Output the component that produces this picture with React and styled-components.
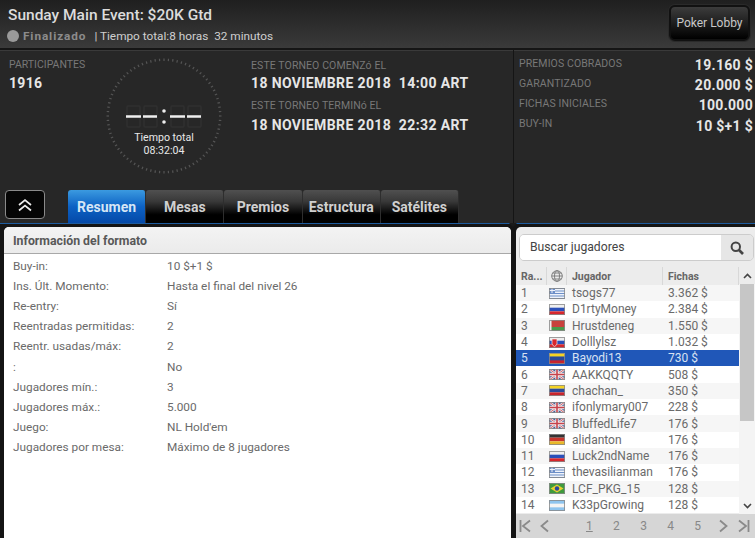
import styled, { createGlobalStyle } from "styled-components";

const Global = createGlobalStyle`
  html, body { margin: 0; padding: 0; background: #272727; overflow: hidden; }
  * { box-sizing: border-box; }
`;

const info = [
  ["Buy-in:", "10 $+1 $"],
  ["Ins. Últ. Momento:", "Hasta el final del nivel 26"],
  ["Re-entry:", "Sí"],
  ["Reentradas permitidas:", "2"],
  ["Reentr. usadas/máx:", "2"],
  [":", "No"],
  ["Jugadores mín.:", "3"],
  ["Jugadores máx.:", "5.000"],
  ["Juego:", "NL Hold'em"],
  ["Jugadores por mesa:", "Máximo de 8 jugadores"],
];

const players = [
  ["tsogs77", "3.362 $", "gr"],
  ["D1rtyMoney", "2.384 $", "ru"],
  ["Hrustdeneg", "1.550 $", "by"],
  ["Dolllylsz", "1.032 $", "sk"],
  ["Bayodi13", "730 $", "co"],
  ["AAKKQQTY", "508 $", "uk"],
  ["chachan_", "350 $", "co"],
  ["ifonlymary007", "228 $", "uk"],
  ["BluffedLife7", "176 $", "uk"],
  ["alidanton", "176 $", "de"],
  ["Luck2ndName", "176 $", "ru"],
  ["thevasilianman", "176 $", "gr"],
  ["LCF_PKG_15", "128 $", "br"],
  ["K33pGrowing", "128 $", "ar"],
];

const prizes = [
  ["PREMIOS COBRADOS", "19.160 $"],
  ["GARANTIZADO", "20.000 $"],
  ["FICHAS INICIALES", "100.000"],
  ["BUY-IN", "10 $+1 $"],
];

const tabs = ["Resumen", "Mesas", "Premios", "Estructura", "Satélites"];

const Page = styled.div`
  width: 755px;
  height: 538px;
  overflow: hidden;
  font-family: Roboto, "Liberation Sans", sans-serif;
  background: #272727;
  display: flex;
  flex-direction: column;
`;

const Header = styled.header`
  height: 50px;
  flex: none;
  padding: 5px 5px 0 8px;
  display: flex;
  justify-content: space-between;
  background: linear-gradient(#1f1f1f, #3a3a3a);
  border-bottom: 2px solid #151515;
  box-shadow: 0 1px 0 #3a3a3a;
`;

const Title = styled.h1`
  margin: 0;
  font-size: 15.5px;
  line-height: 20px;
  font-weight: 500;
  color: #dcdcdc;
`;

const Status = styled.div`
  display: flex;
  align-items: center;
  margin: 3px 0 0 -1px;
  font-size: 11.8px;
  line-height: 16px;
  color: #cfcfcf;
`;

const Dot = styled.span`
  width: 12px;
  height: 12px;
  border-radius: 50%;
  background: #9a9a9a;
  margin-right: 4px;
`;

const Finished = styled.span`
  font-weight: 700;
  letter-spacing: 0.9px;
  color: #8c8c8c;
  margin-right: 8px;
`;

const LobbyButton = styled.button`
  width: 81px;
  height: 36px;
  padding: 0;
  border: 2px solid #111;
  border-radius: 6px;
  background: linear-gradient(#3c3c3c, #000);
  color: #c8c8c8;
  font: 400 12px Roboto, sans-serif;
  box-shadow: 0 0 0 1px #2a2a2a;
`;

const Stats = styled.section`
  height: 174px;
  flex: none;
  display: flex;
  position: relative;
  border-bottom: 1px solid #1d5b9e;
`;

const StatsLeft = styled.div`
  width: 514px;
  flex: none;
  position: relative;
  border-right: 1px solid #151515;
  display: flex;
  flex-wrap: wrap;
  align-content: flex-start;
`;

const Participants = styled.div`
  width: 103px;
  padding: 8px 0 0 9px;
`;

const SmallLabel = styled.div`
  font-size: 10.5px;
  line-height: 13px;
  color: #787878;
  letter-spacing: ${(p) => p.$spacing || 0};
`;

const BigValue = styled.div`
  font-size: 14px;
  line-height: 18px;
  margin-top: 3px;
  font-weight: 700;
  color: #e6e6e6;
  letter-spacing: 0.3px;
`;

const Clock = styled.div`
  width: 118px;
  height: 118px;
  margin: 7px 0 0 2px;
  position: relative;
  display: flex;
  flex-direction: column;
  align-items: center;
  color: #e8e8e8;
  font-size: 10.6px;
  line-height: 12.5px;
  text-align: center;
`;

const ClockFace = styled.svg`
  position: absolute;
  left: 0;
  top: 0;
`;

const ClockText = styled.div`
  position: relative;
  margin-top: 75px;
`;

const Dates = styled.div`
  margin-left: 28px;
  padding-top: 9px;
`;

const DateValue = styled(BigValue)`
  margin: ${(p) => p.$top}px 0 7px;
  white-space: pre;
  letter-spacing: 0.38px;
`;

const TabsRow = styled.nav`
  position: absolute;
  left: 5px;
  bottom: 0;
  display: flex;
  align-items: flex-end;
`;

const CollapseButton = styled.button`
  width: 40px;
  height: 29px;
  margin: 0 23px 4px 0;
  padding: 0;
  background: #050505;
  border: 1px solid #8a8a8a;
  border-radius: 4px;
  display: flex;
  align-items: center;
  justify-content: center;
`;

const Tab = styled.div`
  width: 78.2px;
  height: 33px;
  border-right: 1px solid #2e2e2e;
  border-radius: 3px 3px 0 0;
  font-size: 14px;
  font-weight: 700;
  line-height: 34px;
  text-align: center;
  background: ${(p) =>
    p.$active
      ? "linear-gradient(#3b9ae0, #0d62c4 50%, #0449a8)"
      : "linear-gradient(#505050, #383838 35%, #000 75%)"};
  color: ${(p) => (p.$active ? "#d6e6f5" : "#d0d0d0")};
`;

const StatsRight = styled.div`
  flex: 1;
  padding: 3px 2px 0 5px;
`;

const PrizeRow = styled.div`
  height: 20.2px;
  display: flex;
  justify-content: space-between;
  align-items: center;
`;

const PrizeLabel = styled(SmallLabel)`
  letter-spacing: 0.1px;
`;

const PrizeValue = styled.span`
  font-size: 14px;
  font-weight: 700;
  color: #e6e6e6;
  letter-spacing: 0.3px;
  padding-top: 4px;
`;

const Notch = styled.span`
  position: absolute;
  left: 509px;
  top: 100%;
  border-left: 4px solid transparent;
  border-right: 4px solid transparent;
  border-top: 4px solid #1a1a1a;
  z-index: 2;
`;

const Body = styled.main`
  flex: 1;
  display: flex;
  padding: 3px 0 0 4px;
  background: #141414;
  min-height: 0;
`;

const InfoPanel = styled.section`
  width: 507px;
  background: #fff;
  border-radius: 5px 5px 0 0;
`;

const InfoTitle = styled.h2`
  margin: 0;
  height: 27px;
  padding: 1px 0 0 9px;
  font-size: 12.3px;
  line-height: 27px;
  font-weight: 700;
  color: #585858;
  background: linear-gradient(#f3f3f3, #ebebeb);
  border-bottom: 1px solid #a8a8a8;
  border-radius: 5px 5px 0 0;
`;

const InfoRows = styled.div`
  padding-top: 2px;
`;

const InfoRow = styled.div`
  height: 20.1px;
  padding-left: 9px;
  display: grid;
  grid-template-columns: 154px 1fr;
  align-items: center;
  font-size: 11.8px;
  color: #6a6a6a;
`;

const Side = styled.aside`
  width: 239px;
  margin-left: 5px;
  border-radius: 5px 0 0 0;
  padding-top: 7px;
  display: flex;
  flex-direction: column;
  background: #ececec;
`;

const Search = styled.div`
  height: 27px;
  margin: 0 1px 0 3px;
  display: flex;
  border: 1px solid #ccc;
  border-radius: 5px;
  overflow: hidden;
  flex: none;
`;

const SearchText = styled.div`
  flex: 1;
  background: #fff;
  padding-left: 10px;
  font-size: 12.2px;
  line-height: 25px;
  color: #444;
`;

const SearchIcon = styled.div`
  width: 32px;
  background: #e6e6e6;
  display: flex;
  align-items: center;
  justify-content: center;
`;

const TableWrap = styled.div`
  flex: 1;
  display: flex;
  min-height: 0;
  margin-top: 6px;
`;

const Table = styled.div`
  width: 223px;
  flex: none;
`;

const HeadRow = styled.div`
  height: 18px;
  display: flex;
  align-items: center;
  font-size: 10.5px;
  font-weight: 700;
  color: #666;
  background: #ececec;
`;

const HeadCell = styled.div`
  width: ${(p) => p.$w}px;
  height: 100%;
  padding-left: ${(p) => p.$pad}px;
  line-height: 17px;
  border-right: 1px solid #d8d8d8;
  display: flex;
  align-items: center;
`;

const Row = styled.div`
  height: 16.31px;
  display: flex;
  align-items: center;
  font-size: 12px;
  background: ${(p) => (p.$selected ? "#2057b8" : p.$odd ? "#f6f6f6" : "#fff")};
  color: ${(p) => (p.$selected ? "#d8e2f2" : "#6a6a6a")};
`;

const Rank = styled.div`
  width: 33px;
  padding-left: 5px;
`;

const FlagCell = styled.div`
  width: 23px;
  display: flex;
`;

const Name = styled.div`
  width: 96px;
`;

const Scrollbar = styled.div`
  flex: 1;
  display: flex;
  flex-direction: column;
  background: #f4f4f4;
`;

const ScrollButton = styled.div`
  height: 17px;
  flex: none;
  display: flex;
  align-items: center;
  justify-content: center;
  background: ${(p) => (p.$top ? "#ececec" : "transparent")};
`;

const ScrollTrack = styled.div`
  flex: 1;
`;

const ScrollThumb = styled.div`
  height: 137px;
  background: #c6c6c6;
  margin: 0 1px;
`;

const Pager = styled.div`
  height: 24px;
  flex: none;
  background: #d6d6d6;
  display: flex;
  align-items: center;
  padding-left: 3px;
  font-size: 12px;
  color: #888;
`;

const PagerNums = styled.div`
  display: flex;
  margin-left: 37px;
  width: 115px;
  justify-content: space-between;
`;

const PagerNum = styled.span`
  text-decoration: ${(p) => (p.$current ? "underline" : "none")};
`;

const PagerGroup = styled.div`
  display: flex;
  align-items: center;
  gap: ${(p) => p.$gap}px;
  margin-left: ${(p) => p.$left || 0}px;
`;

const Flag = ({ code }) => {
  const bands = {
    ru: ["#eee", "#2a4fb8", "#d8262c"],
    co: ["#f4d324", "#2a4a9a", "#c8242c"],
    de: ["#333", "#c8342c", "#e8b828"],
  };
  let inner;
  if (bands[code]) {
    inner = bands[code].map((c, i) => <rect key={i} x="0" y={i * 3.67} width="16" height="3.67" fill={c} />);
  } else if (code === "gr") {
    inner = (
      <>
        <rect width="16" height="11" fill="#eef2fa" />
        {[0, 2.5, 5, 7.5, 10].map((y) => <rect key={y} y={y} width="16" height="1" fill="#6d8fc8" />)}
        <rect width="6" height="5" fill="#6d8fc8" />
        <rect x="2.5" width="1" height="5" fill="#eef2fa" />
        <rect y="2" width="6" height="1" fill="#eef2fa" />
      </>
    );
  } else if (code === "by") {
    inner = (
      <>
        <rect width="16" height="7" fill="#c8423c" />
        <rect y="7" width="16" height="4" fill="#4a9a4a" />
        <rect width="2.5" height="11" fill="#eee" />
      </>
    );
  } else if (code === "sk") {
    inner = (
      <>
        <rect width="16" height="3.67" fill="#eee" />
        <rect y="3.67" width="16" height="3.67" fill="#2a4fb8" />
        <rect y="7.33" width="16" height="3.67" fill="#d8262c" />
        <path d="M3 2h5v5q-1 2-2.5 2.5Q4 9 3 7z" fill="#d8262c" stroke="#eee" strokeWidth=".7" />
      </>
    );
  } else if (code === "uk") {
    inner = (
      <>
        <rect width="16" height="11" fill="#4a5f9c" />
        <path d="M0 0l16 11M16 0L0 11" stroke="#eee" strokeWidth="2.4" />
        <path d="M0 0l16 11M16 0L0 11" stroke="#c8424c" strokeWidth=".8" />
        <path d="M8 0v11M0 5.5h16" stroke="#eee" strokeWidth="3.4" />
        <path d="M8 0v11M0 5.5h16" stroke="#c8424c" strokeWidth="1.6" />
      </>
    );
  } else if (code === "br") {
    inner = (
      <>
        <rect width="16" height="11" fill="#3e9a3e" />
        <path d="M8 1.5L14.5 5.5L8 9.5L1.5 5.5z" fill="#e8d030" />
        <circle cx="8" cy="5.5" r="2.2" fill="#2a4a9a" />
      </>
    );
  } else {
    inner = (
      <>
        <rect width="16" height="11" fill="#8ec4ee" />
        <rect y="3.67" width="16" height="3.67" fill="#f4f4f4" />
      </>
    );
  }
  return (
    <svg width="16" height="11" viewBox="0 0 16 11">
      {inner}
      <rect x=".5" y=".5" width="15" height="10" fill="none" stroke="#888" strokeOpacity=".8" />
    </svg>
  );
};

// ghost of a seven segment digit behind the dashes
const Digit = ({ x }) => (
  <g fill="none" stroke="#303030" strokeWidth="1.5">
    <rect x={x} y="49" width="13" height="21" rx="1" />
    <path d={`M${x} 59.5h13`} />
  </g>
);

const Ticks = () => {
  const ticks = [];
  for (let i = 0; i < 80; i++) {
    const a = (i * 4.5 * Math.PI) / 180;
    const c = Math.cos(a);
    const s = Math.sin(a);
    ticks.push(
      <line key={i} x1={59 + 55 * c} y1={59 + 55 * s} x2={59 + 57.5 * c} y2={59 + 57.5 * s} stroke="#565656" strokeWidth="1.2" />
    );
  }
  return ticks;
};

const GoFirst = ({ flip }) => (
  <svg width="13" height="14" viewBox="0 0 13 14" style={flip ? { transform: "scaleX(-1)" } : undefined}>
    <path d="M1.5 1v12M11 1.5L4 7l7 5.5" fill="none" stroke="#8a8a8a" strokeWidth="1.8" />
  </svg>
);

const GoPrev = ({ flip }) => (
  <svg width="9" height="14" viewBox="0 0 9 14" style={flip ? { transform: "scaleX(-1)" } : undefined}>
    <path d="M8 1.5L1.5 7L8 12.5" fill="none" stroke="#8a8a8a" strokeWidth="1.8" />
  </svg>
);

export default function App() {
  return (
    <Page>
      <Global />
      <Header>
        <div>
          <Title>Sunday Main Event: $20K Gtd</Title>
          <Status>
            <Dot />
            <Finished>Finalizado</Finished>
            | Tiempo total:8 horas&nbsp; 32 minutos
          </Status>
        </div>
        <LobbyButton>Poker Lobby</LobbyButton>
      </Header>
      <Stats>
        <StatsLeft>
          <Participants>
            <SmallLabel>PARTICIPANTES</SmallLabel>
            <BigValue>1916</BigValue>
          </Participants>
          <Clock>
            <ClockFace width="118" height="118" viewBox="0 0 118 118">
              <Ticks />
              <Digit x={22} />
              <Digit x={39} />
              <Digit x={66} />
              <Digit x={83} />
              <path d="M21 59.5h15M38 59.5h14M65 59.5h15M82 59.5h14" stroke="#eee" strokeWidth="2.5" />
              <circle cx="59" cy="54" r="1.8" fill="#eee" />
              <circle cx="59" cy="65" r="1.8" fill="#eee" />
            </ClockFace>
            <ClockText>
              Tiempo total
              <br />
              08:32:04
            </ClockText>
          </Clock>
          <Dates>
            <SmallLabel $spacing="0.1px">ESTE TORNEO COMENZó EL</SmallLabel>
            <DateValue $top={2}>18 NOVIEMBRE 2018  14:00 ART</DateValue>
            <SmallLabel $spacing="0.1px">ESTE TORNEO TERMINó EL</SmallLabel>
            <DateValue $top={4}>18 NOVIEMBRE 2018  22:32 ART</DateValue>
          </Dates>
          <TabsRow>
            <CollapseButton>
              <svg width="16" height="14" viewBox="0 0 16 14">
                <path d="M2 7l6-5 6 5M2 12.5l6-5 6 5" fill="none" stroke="#eee" strokeWidth="1.7" />
              </svg>
            </CollapseButton>
            {tabs.map((t, i) => (
              <Tab key={t} $active={i === 0}>{t}</Tab>
            ))}
          </TabsRow>
        </StatsLeft>
        <StatsRight>
          {prizes.map(([label, value]) => (
            <PrizeRow key={label}>
              <PrizeLabel>{label}</PrizeLabel>
              <PrizeValue>{value}</PrizeValue>
            </PrizeRow>
          ))}
        </StatsRight>
        <Notch />
      </Stats>
      <Body>
        <InfoPanel>
          <InfoTitle>Información del formato</InfoTitle>
          <InfoRows>
            {info.map(([k, v], i) => (
              <InfoRow key={i}>
                <span>{k}</span>
                <span>{v}</span>
              </InfoRow>
            ))}
          </InfoRows>
        </InfoPanel>
        <Side>
          <Search>
            <SearchText>Buscar jugadores</SearchText>
            <SearchIcon>
              <svg width="14" height="14" viewBox="0 0 14 14">
                <circle cx="5.8" cy="5.8" r="4.2" fill="none" stroke="#444" strokeWidth="2" />
                <path d="M9 9l4 4" stroke="#444" strokeWidth="2.6" />
              </svg>
            </SearchIcon>
          </Search>
          <TableWrap>
            <Table>
              <HeadRow>
                <HeadCell $w={31} $pad={5}>Ra...</HeadCell>
                <HeadCell $w={20} $pad={4}>
                  <svg width="12" height="12" viewBox="0 0 12 12">
                    <g fill="none" stroke="#777" strokeWidth=".9">
                      <circle cx="6" cy="6" r="5.3" />
                      <ellipse cx="6" cy="6" rx="2.5" ry="5.3" />
                      <path d="M.7 6h10.6M1.5 3h9M1.5 9h9" />
                    </g>
                  </svg>
                </HeadCell>
                <HeadCell $w={96} $pad={5}>Jugador</HeadCell>
                <HeadCell $w={76} $pad={5}>Fichas</HeadCell>
              </HeadRow>
              {players.map(([name, chips, flag], i) => (
                <Row key={name} $odd={i % 2 === 0} $selected={i === 4}>
                  <Rank>{i + 1}</Rank>
                  <FlagCell><Flag code={flag} /></FlagCell>
                  <Name>{name}</Name>
                  <span>{chips}</span>
                </Row>
              ))}
            </Table>
            <Scrollbar>
              <ScrollButton $top>
                <svg width="9" height="6" viewBox="0 0 9 6"><path d="M1 5l3.5-3.5L8 5" fill="none" stroke="#444" strokeWidth="1.6" /></svg>
              </ScrollButton>
              <ScrollTrack><ScrollThumb /></ScrollTrack>
              <ScrollButton>
                <svg width="9" height="6" viewBox="0 0 9 6"><path d="M1 1l3.5 3.5L8 1" fill="none" stroke="#444" strokeWidth="1.6" /></svg>
              </ScrollButton>
            </Scrollbar>
          </TableWrap>
          <Pager>
            <PagerGroup $gap={8}>
              <GoFirst />
              <GoPrev />
            </PagerGroup>
            <PagerNums>
              {[1, 2, 3, 4, 5].map((n) => (
                <PagerNum key={n} $current={n === 1}>{n}</PagerNum>
              ))}
            </PagerNums>
            <PagerGroup $gap={9} $left={18}>
              <GoPrev flip />
              <GoFirst flip />
            </PagerGroup>
          </Pager>
        </Side>
      </Body>
    </Page>
  );
}
